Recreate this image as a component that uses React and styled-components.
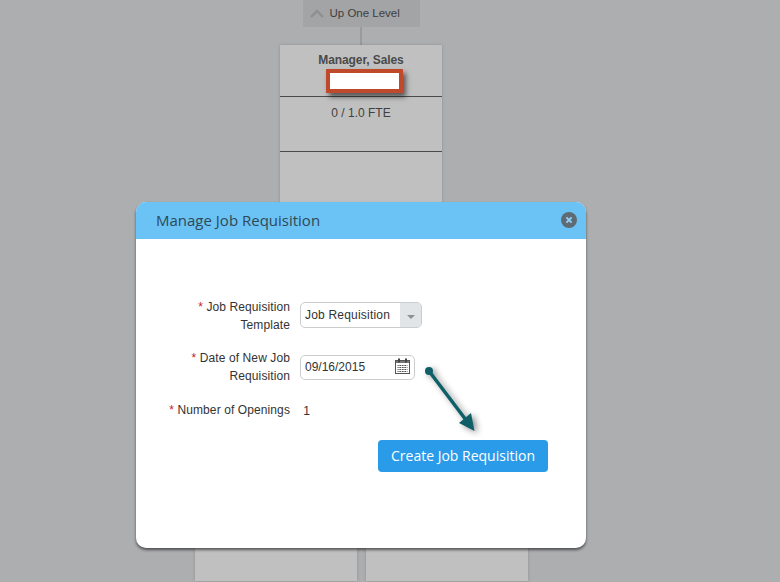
import styled, { createGlobalStyle } from 'styled-components'

const GlobalStyle = createGlobalStyle`
  html, body {
    margin: 0;
    padding: 0;
    height: 100%;
    background: #adaeb0;
    font-family: "Liberation Sans", Arial, sans-serif;
  }
  #root {
    height: 100%;
  }
`

const Page = styled.div`
  position: relative;
  width: 780px;
  height: 582px;
  overflow: hidden;
  background: #adaeb0;
`

const Tree = styled.div`
  display: flex;
  flex-direction: column;
  align-items: center;
  width: 722px;
`

const UpLevel = styled.div`
  width: 117px;
  height: 27px;
  box-sizing: border-box;
  background: #a3a4a6;
  display: flex;
  align-items: center;
  gap: 5px;
  padding: 0 0 2px 6px;
  font-size: 11.5px;
  color: #3e3e3e;
`

const Connector = styled.div`
  width: 2px;
  height: 18px;
  background: #999a9c;
`

const Card = styled.div`
  width: 162px;
  height: 200px;
  background: #c0c0c0;
  box-shadow: 0 0 3px rgba(0, 0, 0, 0.18);
  display: flex;
  flex-direction: column;
  text-align: center;
  font-size: 12px;
  color: #414141;
`

const CardSection = styled.div`
  height: ${(props) => props.$height}px;
  box-sizing: border-box;
  padding-top: ${(props) => props.$top}px;
  border-bottom: ${(props) => (props.$line ? '1px solid #4b4b4b' : 'none')};
  line-height: 14px;
`

const CardTitle = styled.div`
  font-weight: 700;
  letter-spacing: -0.1px;
  color: #4a4a4a;
`

const ChildRow = styled.div`
  display: flex;
  gap: 9px;
  margin-top: 303px;
`

const ChildCard = styled.div`
  width: 162px;
  height: 33px;
  background: #c0c0c0;
  box-shadow: 0 0 3px rgba(0, 0, 0, 0.18);
`

const Redaction = styled.div`
  position: absolute;
  left: 326px;
  top: 69px;
  width: 77px;
  height: 24px;
  box-sizing: border-box;
  background: #fff;
  border: 4px solid #c0492c;
  box-shadow: 3px 4px 5px rgba(0, 0, 0, 0.55);
`

const Modal = styled.div`
  position: absolute;
  left: 136px;
  top: 202px;
  width: 450px;
  height: 346px;
  background: #fff;
  border-radius: 10px;
  box-shadow: 0 2px 3px rgba(0, 0, 0, 0.55);
  overflow: hidden;
`

const ModalHeader = styled.div`
  height: 37px;
  background: #6bc3f5;
  display: flex;
  align-items: center;
  justify-content: space-between;
  padding: 0 9px 0 20px;
`

const ModalTitle = styled.div`
  font-family: "Open Sans", sans-serif;
  font-size: 15px;
  line-height: 20px;
  margin-top: -2px;
  color: #2f4856;
`

const CloseButton = styled.div`
  display: flex;
  margin-top: -2px;
`

const ModalBody = styled.div`
  padding-top: 59px;
  display: flex;
  flex-direction: column;
`

const FormRow = styled.div`
  display: grid;
  grid-template-columns: 154px auto;
  justify-content: start;
  column-gap: 10px;
  align-items: center;
  margin-bottom: ${(props) => props.$gap}px;
`

const Label = styled.label`
  text-align: right;
  font-size: 12px;
  line-height: 18px;
  letter-spacing: 0.1px;
  color: #333;
`

const Star = styled.span`
  color: #c5222c;
`

const Select = styled.div`
  width: 122px;
  height: 26px;
  margin-bottom: 2px;
  box-sizing: border-box;
  border: 1px solid #c9cdcf;
  border-radius: 5px;
  display: flex;
  overflow: hidden;
  font-size: 12px;
  letter-spacing: 0.2px;
  color: #333;
`

const SelectText = styled.div`
  flex: 1;
  padding-left: 4px;
  line-height: 24px;
`

const SelectArrow = styled.div`
  width: 21px;
  background: #e2e5e7;
  display: flex;
  align-items: center;
  justify-content: center;
  &::after {
    content: '';
    margin-top: 3px;
    border-left: 4px solid transparent;
    border-right: 4px solid transparent;
    border-top: 4px solid #8b9196;
  }
`

const DateInput = styled.div`
  width: 115px;
  height: 25px;
  box-sizing: border-box;
  border: 1px solid #c9cdcf;
  border-radius: 5px;
  padding: 0 4px;
  display: flex;
  align-items: center;
  justify-content: space-between;
  font-size: 12px;
  color: #333;
`

const CalendarWrap = styled.span`
  display: flex;
  margin: -3px 0 0;
`

const Value = styled.div`
  font-size: 12px;
  margin-top: 1px;
  color: #333;
`

const ButtonRow = styled.div`
  display: flex;
  justify-content: flex-end;
  padding-right: 38px;
`

const PrimaryButton = styled.button`
  width: 170px;
  height: 32px;
  border: none;
  border-radius: 4px;
  padding: 0 0 2px;
  background: #2a9be8;
  color: #fff;
  font-family: "Open Sans", sans-serif;
  font-size: 14px;
  font-weight: 500;
`

const Arrow = styled.svg`
  position: absolute;
  left: 420px;
  top: 360px;
  overflow: visible;
  filter: drop-shadow(3px 2px 3px rgba(0, 0, 0, 0.45));
`

function Chevron() {
  return (
    <svg width="16" height="10" viewBox="0 0 16 10" fill="none">
      <path d="M2 9 L8 3 L14 9" stroke="#8e8f91" strokeWidth="2.4" />
    </svg>
  )
}

function CloseIcon() {
  return (
    <svg width="16" height="16" viewBox="0 0 16 16">
      <circle cx="8" cy="8" r="8" fill="#5f6b72" />
      <path d="M5.4 5.4 L10.6 10.6 M10.6 5.4 L5.4 10.6" stroke="#8fd0f5" strokeWidth="2" />
    </svg>
  )
}

function CalendarIcon() {
  return (
    <svg width="15" height="16" viewBox="0 0 15 16">
      <rect x="0.5" y="2.5" width="14" height="13" fill="#fff" stroke="#555" />
      <rect x="1" y="3" width="13" height="2" fill="#777" />
      <rect x="3" y="0.5" width="2" height="4" fill="#444" />
      <rect x="10" y="0.5" width="2" height="4" fill="#444" />
      <path d="M2.5 7.5 H12.5 M2.5 9.5 H12.5 M2.5 11.5 H12.5 M2.5 13.5 H12.5" stroke="#555" strokeWidth="1" />
      <path d="M4 6.5 V14.5 M6.5 6.5 V14.5 M9 6.5 V14.5 M11.5 6.5 V14.5" stroke="#fff" strokeWidth="0.7" />
    </svg>
  )
}

export default function App() {
  return (
    <Page>
      <GlobalStyle />
      <Tree>
        <UpLevel>
          <Chevron />
          Up One Level
        </UpLevel>
        <Connector />
        <Card>
          <CardSection $height={52} $top={8} $line>
            <CardTitle>Manager, Sales</CardTitle>
            <div>00000000</div>
          </CardSection>
          <CardSection $height={55} $top={9} $line>
            0 / 1.0 FTE
          </CardSection>
        </Card>
        <ChildRow>
          <ChildCard />
          <ChildCard />
        </ChildRow>
      </Tree>
      <Redaction />
      <Modal>
        <ModalHeader>
          <ModalTitle>Manage Job Requisition</ModalTitle>
          <CloseButton>
            <CloseIcon />
          </CloseButton>
        </ModalHeader>
        <ModalBody>
          <FormRow $gap={15}>
            <Label>
              <Star>*</Star> Job Requisition
              <br />
              Template
            </Label>
            <Select>
              <SelectText>Job Requisition</SelectText>
              <SelectArrow />
            </Select>
          </FormRow>
          <FormRow $gap={16}>
            <Label>
              <Star>*</Star> Date of New Job
              <br />
              Requisition
            </Label>
            <DateInput>
              09/16/2015
              <CalendarWrap>
                <CalendarIcon />
              </CalendarWrap>
            </DateInput>
          </FormRow>
          <FormRow $gap={21}>
            <Label>
              <Star>*</Star> Number of Openings
            </Label>
            <Value>&nbsp;1</Value>
          </FormRow>
          <ButtonRow>
            <PrimaryButton>Create Job Requisition</PrimaryButton>
          </ButtonRow>
        </ModalBody>
      </Modal>
      <Arrow width="60" height="75" viewBox="0 0 60 75">
        <circle cx="9" cy="11" r="4" fill="#0f5f68" />
        <path d="M9 11 L46 60" stroke="#0f5f68" strokeWidth="3.5" />
        <path d="M54.5 71 L39 63 L51 53 Z" fill="#0f5f68" />
      </Arrow>
    </Page>
  )
}
